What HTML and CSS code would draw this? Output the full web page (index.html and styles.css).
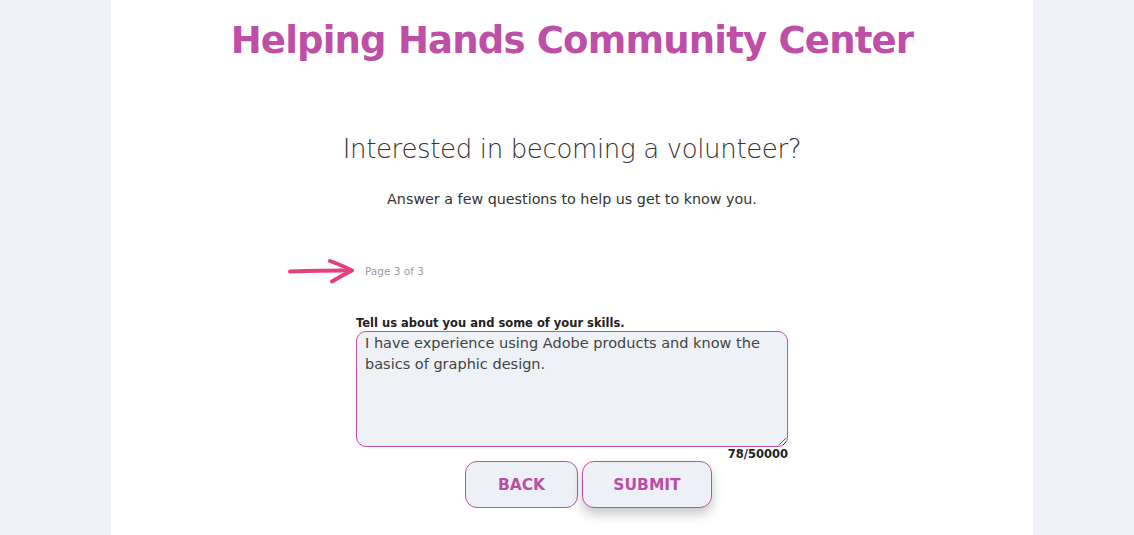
FILE: index.html
```html
<!DOCTYPE html>
<html lang="en">
<head>
  <meta charset="UTF-8" />
  <meta name="viewport" content="width=device-width, initial-scale=1.0" />
  <title>Helping Hands Community Center - Volunteer</title>
  <link rel="stylesheet" href="styles.css">
</head>
<body>
  <div class="panel">
    <h1 class="brand">Helping Hands Community Center</h1>

    <h2 class="intro">Interested in becoming a volunteer?</h2>
    <p class="lead">Answer a few questions to help us get to know you.</p>

    <form class="survey">
      <div class="pager">
        <svg class="arrow" width="68" height="26" viewBox="0 0 68 26">
          <path d="M2 13.5 C20 13 38 12.5 62 12.6" fill="none" stroke="#e4407f" stroke-width="4" stroke-linecap="round"/>
          <path d="M42 3 C50 6 58 9 64 12.5 C57 16 50 20 44 23.5" fill="none" stroke="#e4407f" stroke-width="4" stroke-linecap="round" stroke-linejoin="round"/>
        </svg>
        <span>Page 3 of 3</span>
      </div>

      <label for="skills">Tell us about you and some of your skills.</label>
      <textarea id="skills">I have experience using Adobe products and know the basics of graphic design.</textarea>
      <div class="count">78/50000</div>

      <div class="actions">
        <button type="button" class="back">BACK</button>
        <button type="submit" class="submit">SUBMIT</button>
      </div>
    </form>
  </div>
</body>
</html>
```

FILE: styles.css
```css
body {
  margin: 0;
  font-family: "DejaVu Sans", "Open Sans", sans-serif;
  background-color: #eef1f6;
  color: #333;
}

.panel {
  width: 922px;
  height: 535px;
  margin-left: 111px;
  background-color: #fff;
  box-sizing: border-box;
  padding-top: 17px;
  text-align: center;
}

.brand {
  margin: 0;
  font-size: 37px;
  font-weight: bold;
  letter-spacing: -0.8px;
  line-height: 48px;
  color: #bd4fa7;
}

.intro {
  margin: 66px 0 0;
  font-size: 26px;
  font-weight: 300;
  line-height: 36px;
  letter-spacing: -0.35px;
  color: #333;
}

.lead {
  margin: 22px 0 0;
  font-size: 14.3px;
  line-height: 20px;
  color: #333;
}

.survey {
  width: 432px;
  margin: 0 auto;
  text-align: left;
}

.pager {
  position: relative;
  margin-top: 52px;
  padding-left: 9px;
  font-size: 10.5px;
  line-height: 20px;
  color: #9a9ca3;
}

.arrow {
  position: absolute;
  left: -68px;
  top: -3px;
}

label {
  display: block;
  margin-top: 34px;
  font-size: 11.5px;
  font-weight: bold;
  line-height: 16px;
  color: #222;
}

textarea {
  display: block;
  width: 100%;
  height: 116px;
  box-sizing: border-box;
  padding: 1px 8px;
  font-family: inherit;
  font-size: 14.5px;
  line-height: 21px;
  color: #444;
  background-color: #eef1f6;
  border: 1px solid #c24fa9;
  border-radius: 10px;
  resize: vertical;
}

.count {
  text-align: right;
  font-size: 11.5px;
  font-weight: bold;
  line-height: 14px;
  color: #222;
}

.actions {
  display: flex;
  gap: 4px;
  padding-left: 109px;
}

.actions button {
  height: 47px;
  font-family: inherit;
  font-size: 15.5px;
  font-weight: bold;
  color: #b94fa5;
  background-color: #eef0f7;
  border: 1px solid #c24fa9;
  border-radius: 12px;
}

.back {
  width: 113px;
}

.submit {
  width: 130px;
  box-shadow: 0 6px 12px rgba(0, 0, 0, 0.22);
}
```
